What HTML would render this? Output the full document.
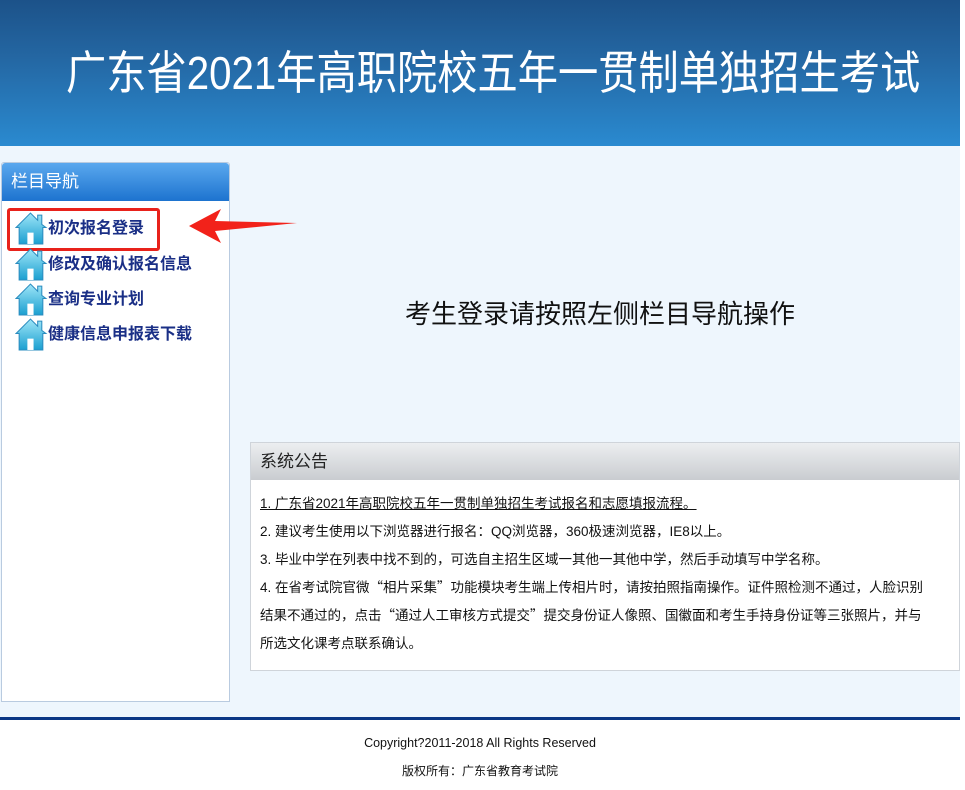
<!DOCTYPE html>
<html><head><meta charset="utf-8"><style>
*{margin:0;padding:0;box-sizing:border-box}
body{width:965px;height:790px;background:#fff;font-family:"Liberation Sans","Noto Sans CJK SC",sans-serif;position:relative;overflow:hidden}
.hdr{position:absolute;left:0;top:0;width:960px;height:146px;background:linear-gradient(#1c5289,#2467a3 40%,#2a8ad0)}
.hdr h1{position:absolute;left:66px;top:46px;font-weight:normal;color:#fff;font-size:46px;line-height:54px;white-space:nowrap;transform:scaleX(0.875);transform-origin:0 0}
.main{position:absolute;left:0;top:146px;width:960px;height:571px;background:#eef6fd}
.side{position:absolute;left:1px;top:16px;width:229px;height:540px;background:#fff;border:1px solid #b9cbe0;border-radius:3px 3px 0 0}
.side .t{height:38px;background:linear-gradient(#5aa8ee,#1d73cf);color:#fff;font-size:17px;line-height:38px;padding-left:9px;border-radius:3px 3px 0 0}
.item{position:absolute;left:13px;height:34px;color:#1a2f86;font-weight:bold;font-size:16px;line-height:34px;white-space:nowrap}
.item svg{position:absolute;left:0;top:0}
.item span{position:absolute;left:33px;top:1px}
.hl{position:absolute;left:5px;top:45px;width:153px;height:43px;border:3px solid #e8221b;border-radius:3px}
.msg{position:absolute;left:245px;top:148px;width:710px;text-align:center;font-size:26px;color:#111}
.box{position:absolute;left:250px;top:296px;width:710px;height:229px;background:#fff;border:1px solid #cfd4da}
.box .t{height:37px;background:linear-gradient(#eceef0,#c9ccd0);font-size:17px;line-height:38px;padding-left:9px;color:#222}
.box p{font-size:13.5px;color:#111;padding:0 8px 0 9px;line-height:28px;white-space:nowrap}
.box .c{padding-top:10px}
.q{font-family:"Noto Sans CJK SC",sans-serif;line-height:0}
.foot{position:absolute;left:0;top:717px;width:960px;height:3px;background:#0a3785}
.f1{position:absolute;left:0;top:736px;width:960px;text-align:center;font-size:12.5px;color:#111}
.f2{position:absolute;left:0;top:762px;width:960px;text-align:center;font-size:12px;color:#111}
</style></head><body>
<div class="hdr"><h1>广东省2021年高职院校五年一贯制单独招生考试</h1></div>
<div class="main">
<div class="side"><div class="t">栏目导航</div>
<div class="hl"></div>
<svg width="1" height="1"><defs><linearGradient id="g" x1="0" y1="0" x2="0" y2="1"><stop offset="0" stop-color="#9fe6f8"/><stop offset="1" stop-color="#1b9fd0"/></linearGradient></defs></svg>
<div class="item" style="top:48px"><svg width="33" height="34" viewBox="0 0 32 33"><path d="M1 16 L15 2 L22 9 V4 H26 V13 L30 16 H27 V32 H4 V16 Z" fill="url(#g)" stroke="#2b8cbf" stroke-width="1"/><rect x="12" y="21" width="6" height="11" fill="#fff"/></svg><span>初次报名登录</span></div>
<div class="item" style="top:84px"><svg width="33" height="34" viewBox="0 0 32 33"><path d="M1 16 L15 2 L22 9 V4 H26 V13 L30 16 H27 V32 H4 V16 Z" fill="url(#g)" stroke="#2b8cbf" stroke-width="1"/><rect x="12" y="21" width="6" height="11" fill="#fff"/></svg><span>修改及确认报名信息</span></div>
<div class="item" style="top:119px"><svg width="33" height="34" viewBox="0 0 32 33"><path d="M1 16 L15 2 L22 9 V4 H26 V13 L30 16 H27 V32 H4 V16 Z" fill="url(#g)" stroke="#2b8cbf" stroke-width="1"/><rect x="12" y="21" width="6" height="11" fill="#fff"/></svg><span>查询专业计划</span></div>
<div class="item" style="top:154px"><svg width="33" height="34" viewBox="0 0 32 33"><path d="M1 16 L15 2 L22 9 V4 H26 V13 L30 16 H27 V32 H4 V16 Z" fill="url(#g)" stroke="#2b8cbf" stroke-width="1"/><rect x="12" y="21" width="6" height="11" fill="#fff"/></svg><span>健康信息申报表下载</span></div>
</div>
<svg style="position:absolute;left:185px;top:60px" width="115" height="40"><path d="M4 20 L36 3 L30 15 L112 17 L30 25 L36 37 Z" fill="#f2221a"/></svg>
<div class="msg">考生登录请按照左侧栏目导航操作</div>
<div class="box"><div class="t">系统公告</div>
<div class="c">
<p><u>1. 广东省2021年高职院校五年一贯制单独招生考试报名和志愿填报流程。</u></p>
<p>2. 建议考生使用以下浏览器进行报名：QQ浏览器，360极速浏览器，IE8以上。</p>
<p>3. 毕业中学在列表中找不到的，可选自主招生区域一其他一其他中学，然后手动填写中学名称。</p>
<p>4. 在省考试院官微<span class="q">“</span>相片采集<span class="q">”</span>功能模块考生端上传相片时，请按拍照指南操作。证件照检测不通过，人脸识别<br>结果不通过的，点击<span class="q">“</span>通过人工审核方式提交<span class="q">”</span>提交身份证人像照、国徽面和考生手持身份证等三张照片，并与<br>所选文化课考点联系确认。</p>
</div></div>
</div>
<div class="foot"></div>
<div class="f1">Copyright?2011-2018 All Rights Reserved</div>
<div class="f2">版权所有：广东省教育考试院</div>
</body></html>
